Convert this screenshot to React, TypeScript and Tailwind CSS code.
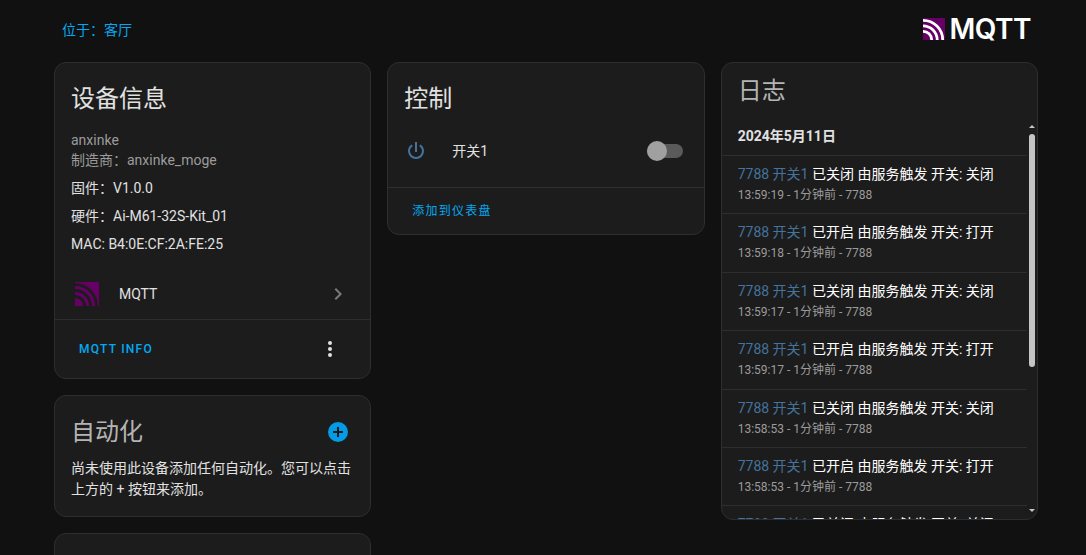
const logEntries = [
  { action: "已关闭", state: "关闭", time: "13:59:19" },
  { action: "已开启", state: "打开", time: "13:59:18" },
  { action: "已关闭", state: "关闭", time: "13:59:17" },
  { action: "已开启", state: "打开", time: "13:59:17" },
  { action: "已关闭", state: "关闭", time: "13:58:53" },
  { action: "已开启", state: "打开", time: "13:58:53" },
  { action: "已关闭", state: "关闭", time: "13:58:52" },
];

function MqttMark({ stroke, className }: { stroke: string; className: string }) {
  return (
    <svg viewBox="0 0 24 24" className={className}>
      <rect width="24" height="24" fill="#660066" />
      <g fill="none" stroke={stroke} strokeWidth="3">
        <path d="M0 14.5A9.5 9.5 0 0 1 9.5 24" />
        <path d="M0 8.5A15.5 15.5 0 0 1 15.5 24" />
        <path d="M0 2.5A21.5 21.5 0 0 1 21.5 24" />
      </g>
    </svg>
  );
}

function MdiIcon({ d, className }: { d: string; className: string }) {
  return (
    <svg viewBox="0 0 24 24" className={className} fill="currentColor">
      <path d={d} />
    </svg>
  );
}

function Card({ children, className }: { children?: React.ReactNode; className?: string }) {
  return (
    <div className={`rounded-xl border border-[#2e2e2e] bg-[#1c1c1c] ${className ?? ""}`}>
      {children}
    </div>
  );
}

export default function App() {
  return (
    <div
      className="h-screen overflow-hidden bg-[#111111] pl-[54px] pr-[48px] text-[14px] leading-5 text-[#e1e1e1]"
      style={{ fontFamily: 'Roboto, "Noto Sans CJK SC", sans-serif' }}
    >
      <div className="flex h-[62px] items-start justify-between pl-2 pr-[7px] pt-[18px]">
        <div className="pt-[2px] text-[#03a9f4]">{"位于\uFF1A客厅"}</div>
        <div className="flex items-start gap-1">
          <MqttMark stroke="#ffffff" className="h-[22px] w-[22px]" />
          <span
            className="text-[28px] leading-[22px] font-semibold tracking-[-0.5px] text-white"
            style={{ fontFamily: "Inter, sans-serif" }}
          >
            MQTT
          </span>
        </div>
      </div>

      <div className="flex gap-4">
        <div className="flex flex-1 flex-col gap-4">
          <Card className="h-[317px]">
            <div className="px-4 pt-[20px] text-[24px] leading-8">设备信息</div>
            <div className="px-4 pt-[15px]">
              <div className="text-[#9b9b9b]">anxinke</div>
              <div className="text-[#9b9b9b]">{"制造商\uFF1Aanxinke_moge"}</div>
              <div className="pt-2">{"固件\uFF1AV1.0.0"}</div>
              <div className="pt-2">{"硬件\uFF1AAi-M61-32S-Kit_01"}</div>
              <div className="pt-2">MAC: B4:0E:CF:2A:FE:25</div>
            </div>
            <div className="mt-[14px] flex h-[52px] items-center border-b border-[#2e2e2e] pl-5 pr-5">
              <MqttMark stroke="#1c1c1c" className="h-6 w-6" />
              <span className="ml-5 flex-1">MQTT</span>
              <MdiIcon
                d="M8.59,16.58L13.17,12L8.59,7.41L10,6L16,12L10,18L8.59,16.58Z"
                className="h-6 w-6 text-[#7a7a7a]"
              />
            </div>
            <div className="flex h-[58px] items-center justify-between pl-6 pr-[38px]">
              <span className="text-[12px] font-medium tracking-[1.25px] text-[#03a9f4]">MQTT INFO</span>
              <div className="flex flex-col gap-[2px]">
                <span className="h-1 w-1 rounded-full bg-[#e1e1e1]" />
                <span className="h-1 w-1 rounded-full bg-[#e1e1e1]" />
                <span className="h-1 w-1 rounded-full bg-[#e1e1e1]" />
              </div>
            </div>
          </Card>

          <Card className="h-[122px] px-4">
            <div className="flex items-center justify-between pr-[6px] pt-5">
              <span className="text-[24px] leading-8 text-[#b4b4b4]">自动化</span>
              <span className="flex h-5 w-5 items-center justify-center rounded-full bg-[#039be5]">
                <svg viewBox="0 0 12 12" className="h-3 w-3">
                  <path d="M6 1v10M1 6h10" stroke="#1c1c1c" strokeWidth="2" />
                </svg>
              </span>
            </div>
            <p className="pt-[10px] leading-[21px]">
              尚未使用此设备添加任何自动化。您可以点击上方的 + 按钮来添加。
            </p>
          </Card>

          <Card className="h-[122px]" />
        </div>

        <div className="flex-1">
          <Card className="h-[173px]">
            <div className="px-4 pt-[20px] text-[24px] leading-8">控制</div>
            <div className="flex h-[72px] items-center pl-4 pr-[21px]">
              <MdiIcon
                d="M16.56,5.44L15.11,6.89C16.84,7.94 18,9.83 18,12A6,6 0 0,1 12,18A6,6 0 0,1 6,12C6,9.83 7.16,7.94 8.88,6.88L7.44,5.44C5.36,6.88 4,9.28 4,12A8,8 0 0,0 12,20A8,8 0 0,0 20,12C20,9.28 18.64,6.88 16.56,5.44M13,3H11V13H13"
                className="h-6 w-6 text-[#44739e]"
              />
              <span className="ml-6 flex-1">开关1</span>
              <div className="relative h-[14px] w-9 rounded-full bg-[#5a5a5a]">
                <span className="absolute -top-[3px] left-0 h-5 w-5 rounded-full bg-[#a0a0a0]" />
              </div>
            </div>
            <div className="flex h-[47px] items-center border-t border-[#2e2e2e] pl-6">
              <span className="text-[12px] tracking-[1.25px] text-[#03a9f4]">添加到仪表盘</span>
            </div>
          </Card>
        </div>

        <div className="flex-1">
          <Card className="relative h-[458px] overflow-hidden">
            <div className="px-4 pt-[12px] text-[24px] leading-8 text-[#b4b4b4]">日志</div>
            <div className="mr-[10px] mt-[10px]">
              <div className="flex h-[39px] items-center border-b border-[#2e2e2e] px-4 font-bold">
                2024年5月11日
              </div>
              {logEntries.map((entry, i) => (
                <div key={i} className="h-[58.4px] border-b border-[#2e2e2e] px-4 pt-2">
                  <div className="truncate text-white">
                    <span className="text-[#44739e]">7788 开关1</span> {entry.action} 由服务触发 开关: {entry.state}
                  </div>
                  <div className="pt-[1px] text-[12px] leading-[20px] text-[#9b9b9b]">
                    {entry.time} - 1分钟前 - 7788
                  </div>
                </div>
              ))}
            </div>
            <div className="absolute right-[2px] top-[62px] flex h-[387px] w-[6px] flex-col items-center">
              <span className="h-0 w-0 border-x-[3px] border-b-[3px] border-x-transparent border-b-[#c4c4c4]" />
              <span className="mt-[6px] h-[233px] w-[6px] rounded-full bg-[#c4c4c4]" />
              <span className="mt-auto h-0 w-0 border-x-[3px] border-t-[3px] border-x-transparent border-t-[#c4c4c4]" />
            </div>
          </Card>
        </div>
      </div>
    </div>
  );
}
